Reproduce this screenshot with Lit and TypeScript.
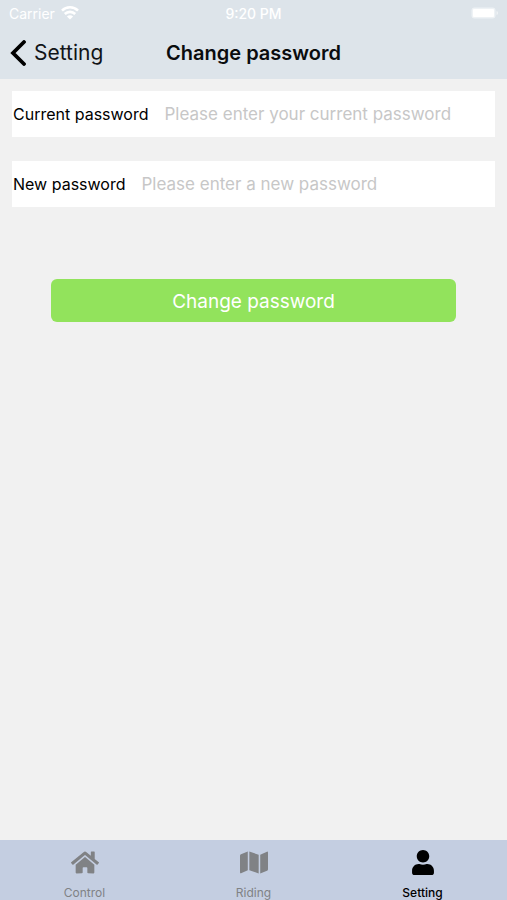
import { LitElement, html, svg, css } from "lit";
import { customElement, state } from "lit/decorators.js";
import { classMap } from "lit/directives/class-map.js";

interface Tab {
  label: string;
  viewBox: string;
  path: string;
}

const TABS: Tab[] = [
  {
    label: "Control",
    viewBox: "0 0 576 512",
    path: "M280.37 148.26L96 300.11V464a16 16 0 0 0 16 16l112.06-.29a16 16 0 0 0 15.92-16V368a16 16 0 0 1 16-16h64a16 16 0 0 1 16 16v95.64a16 16 0 0 0 16 16.05L464 480a16 16 0 0 0 16-16V300L295.67 148.26a12.19 12.19 0 0 0-15.3 0zM571.6 251.47L488 182.56V44.05a12 12 0 0 0-12-12h-56a12 12 0 0 0-12 12v72.61L318.47 43a48 48 0 0 0-61 0L4.34 251.47a12 12 0 0 0-1.6 16.9l25.5 31A12 12 0 0 0 45.15 301l235.22-193.74a12.19 12.19 0 0 1 15.3 0L530.9 301a12 12 0 0 0 16.9-1.6l25.5-31a12 12 0 0 0-1.7-16.93z",
  },
  {
    label: "Riding",
    viewBox: "0 0 576 512",
    path: "M0 117.66v346.32c0 11.32 11.43 19.06 21.94 14.86L160 416V32L20.12 87.95A32.006 32.006 0 0 0 0 117.66zM192 416l192 64V96L192 32v384zM554.06 33.16L416 96v384l139.88-55.95A31.996 31.996 0 0 0 576 394.34V48.02c0-11.32-11.43-19.06-21.94-14.86z",
  },
  {
    label: "Setting",
    viewBox: "0 0 448 512",
    path: "M224 256c70.7 0 128-57.3 128-128S294.7 0 224 0 96 57.3 96 128s57.3 128 128 128zm89.6 32h-16.7c-22.2 10.2-46.9 16-72.9 16s-50.6-5.8-72.9-16h-16.7C60.2 288 0 348.2 0 422.4V464c0 26.5 21.5 48 48 48h352c26.5 0 48-21.5 48-48v-41.6c0-74.2-60.2-134.4-134.4-134.4z",
  },
];

@customElement("app-root")
export class AppRoot extends LitElement {
  @state() private active = "Setting";

  static styles = css`
    :host {
      display: flex;
      flex-direction: column;
      min-height: 100vh;
      background: #f1f1f1;
      color: #000;
      font-family: Inter, "Liberation Sans", sans-serif;
      font-size: 16px;
    }
    * {
      box-sizing: border-box;
    }
    button,
    input {
      font: inherit;
      color: inherit;
      border: 0;
      margin: 0;
      padding: 0;
      background: none;
    }
    svg {
      display: block;
    }
    .top {
      background: #dde4ea;
    }
    .status,
    .nav {
      display: grid;
      grid-template-columns: 1fr auto 1fr;
      align-items: center;
    }
    .status {
      height: 26px;
      padding: 0 9px;
      font-size: 14px;
      color: #fff;
    }
    .carrier {
      display: flex;
      align-items: center;
      gap: 6px;
    }
    .time {
      font-weight: 500;
    }
    .battery {
      justify-self: end;
    }
    .nav {
      height: 53px;
      padding: 0 10px;
    }
    .back {
      display: flex;
      align-items: center;
      gap: 8px;
      justify-self: start;
      font-size: 21px;
      color: #111418;
      text-decoration: none;
    }
    .title {
      margin: 0;
      font-size: 20px;
      font-weight: 600;
      color: #0a0c0e;
    }
    .form {
      flex: 1;
      display: flex;
      flex-direction: column;
      gap: 24px;
      padding: 12px;
    }
    .field {
      display: flex;
      align-items: center;
      gap: 16px;
      height: 46px;
      padding-left: 1px;
      background: #fff;
    }
    .field input {
      flex: 1;
      min-width: 0;
      height: 100%;
      outline: none;
      font-size: 17px;
    }
    .field input::placeholder {
      color: #c7c7c7;
      opacity: 1;
    }
    .submit {
      height: 43px;
      margin: 48px 39px 0;
      padding-top: 2px;
      border-radius: 6px;
      background: #92e35c;
      color: #fff;
      font-size: 19px;
    }
    .tabs {
      display: grid;
      grid-template-columns: repeat(3, 1fr);
      height: 60px;
      background: #c4cee1;
    }
    .tab {
      display: flex;
      flex-direction: column;
      align-items: center;
      gap: 11px;
      padding-top: 10px;
      font-size: 12px;
      line-height: 14px;
      color: #808285;
    }
    .tab.active {
      color: #000;
      font-weight: 500;
    }
    .glyph {
      width: 28px;
      height: 25px;
    }
  `;

  render() {
    return html`
      <header class="top">
        <div class="status">
          <span class="carrier">
            Carrier
            <svg width="18" height="14" viewBox="0 0 18 14" fill="none" stroke="#fff" stroke-width="2.6">
              <path d="M1 4.6A11.4 11.4 0 0 1 17 4.6" />
              <path d="M3.8 8A7.4 7.4 0 0 1 14.2 8" />
              <path d="M9 13.6L5.9 10.5A4.4 4.4 0 0 1 12.1 10.5Z" fill="#fff" stroke="none" />
            </svg>
          </span>
          <span class="time">9:20 PM</span>
          <svg class="battery" width="27" height="12" viewBox="0 0 27 12">
            <rect x="0.5" y="0.5" width="24" height="11" rx="3" fill="#eef2f5" />
            <rect x="2" y="2" width="21" height="8" rx="1" fill="#fff" />
            <path d="M25.500 4c2 .6 2 3.400 0 4z" fill="#eef2f5" />
          </svg>
        </div>
        <nav class="nav">
          <a class="back" href="#setting">
            <svg width="16" height="26" viewBox="0 0 16 26" fill="none" stroke="#000" stroke-width="3.8" stroke-linecap="round">
              <path d="M14 2L3 13L14 24" />
            </svg>
            Setting
          </a>
          <h1 class="title">Change password</h1>
        </nav>
      </header>
      <form class="form" @submit=${(e: Event) => e.preventDefault()}>
        <div class="field">
          <label for="current">Current password</label>
          <input id="current" type="password" placeholder="Please enter your current password" />
        </div>
        <div class="field">
          <label for="new">New password</label>
          <input id="new" type="password" placeholder="Please enter a new password" />
        </div>
        <button class="submit" type="submit">Change password</button>
      </form>
      <nav class="tabs">
        ${TABS.map(
          (t) => html`
            <button
              type="button"
              class=${classMap({ tab: true, active: t.label === this.active })}
              @click=${() => (this.active = t.label)}
            >
              <svg class="glyph" viewBox=${t.viewBox} fill="currentColor">${svg`<path d=${t.path} />`}</svg>
              ${t.label}
            </button>
          `
        )}
      </nav>
    `;
  }
}
